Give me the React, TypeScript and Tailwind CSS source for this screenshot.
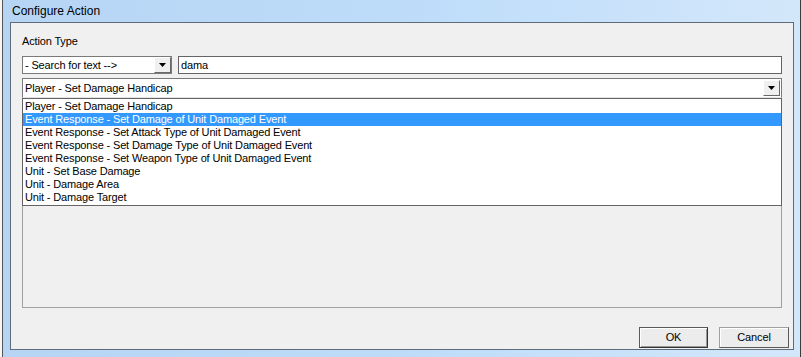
import React from "react";

const ITEMS = [
  "Player - Set Damage Handicap",
  "Event Response - Set Damage of Unit Damaged Event",
  "Event Response - Set Attack Type of Unit Damaged Event",
  "Event Response - Set Damage Type of Unit Damaged Event",
  "Event Response - Set Weapon Type of Unit Damaged Event",
  "Unit - Set Base Damage",
  "Unit - Damage Area",
  "Unit - Damage Target",
];

function ArrowButton() {
  return (
    <div className="flex h-full w-[17px] shrink-0 items-center justify-center border border-t-white border-l-white border-r-[#696969] border-b-[#696969] bg-[#f0f0f0]">
      <svg width="7" height="4" viewBox="0 0 7 4">
        <path d="M0 0h7L3.5 4z" fill="#000" />
      </svg>
    </div>
  );
}

export default function App() {
  return (
    <div
      className="flex h-[357px] w-[801px] overflow-hidden text-black"
      style={{ fontFamily: '"Liberation Sans", Arial, sans-serif' }}
    >
      <div className="w-[2px] shrink-0 bg-[#f6f6f6]" />
      <div className="w-[1px] shrink-0 bg-[#555]" />
      <div className="flex flex-1 flex-col border-r border-[#3c3c3c] bg-gradient-to-r from-[#b6d5f4] via-[#bddcfa] to-[#d3e7fa] pl-[7px] pr-[6px]">
        <div className="h-[22px] shrink-0 pl-[2px] pt-[3px] text-[12px] leading-[16px] text-black">
          Configure Action
        </div>

        <div className="relative flex h-[328px] shrink-0 flex-col border border-[#5f6b78] bg-[#f0f0f0] pl-[11px] pr-[4px] text-[11px] tracking-[-0.15px]">
          <div className="mt-[12px] h-[13px] leading-[13px]">Action Type</div>

          <div className="mt-[8px] flex h-[18px] gap-[6px] pr-[7px]">
            <div className="flex h-full w-[150px] items-stretch border border-[#7a7a7a] bg-white">
              <div className="flex-1 pl-[2px] leading-[16px]">- Search for text --&gt;</div>
              <ArrowButton />
            </div>
            <div className="h-full flex-1 border border-[#646464] bg-white pl-[2px] leading-[16px]">
              dama
            </div>
          </div>

          <div className="mt-[4px] flex h-[20px] pr-[7px]">
            <div className="flex h-full flex-1 items-stretch border border-[#7a7a7a] border-b-[#e3e3e3] bg-white">
              <div className="flex-1 pl-[2px] leading-[18px]">Player - Set Damage Handicap</div>
              <div className="py-[1px] pr-[1px]">
                <ArrowButton />
              </div>
            </div>
          </div>

          <div className="h-[210px] shrink-0 pr-[7px]">
            <div className="h-full border border-[#a0a0a0]" />
          </div>

          <div className="mt-[19px] flex justify-end gap-[11px]">
            <button className="h-[21px] w-[69px] border border-[#5a5a5a] border-r-[#333] border-b-[#333] bg-[#ececec] leading-[19px] shadow-[inset_1px_1px_0_#fff,inset_-1px_-1px_0_#9a9a9a]">
              OK
            </button>
            <button className="h-[21px] w-[70px] border border-[#a0a0a0] border-r-[#5a5a5a] border-b-[#5a5a5a] bg-[#ececec] leading-[19px] shadow-[inset_1px_1px_0_#fff]">
              Cancel
            </button>
          </div>

          <div className="absolute left-[11px] top-[75px] w-[760px] border border-[#646464] bg-white py-[1px]">
            {ITEMS.map((item, i) => (
              <div
                key={item}
                className={
                  "h-[13px] pl-[2px] leading-[13px] " +
                  (i === 1 ? "bg-[#3399ff] text-white" : "")
                }
              >
                {item}
              </div>
            ))}
          </div>
        </div>
      </div>
    </div>
  );
}
